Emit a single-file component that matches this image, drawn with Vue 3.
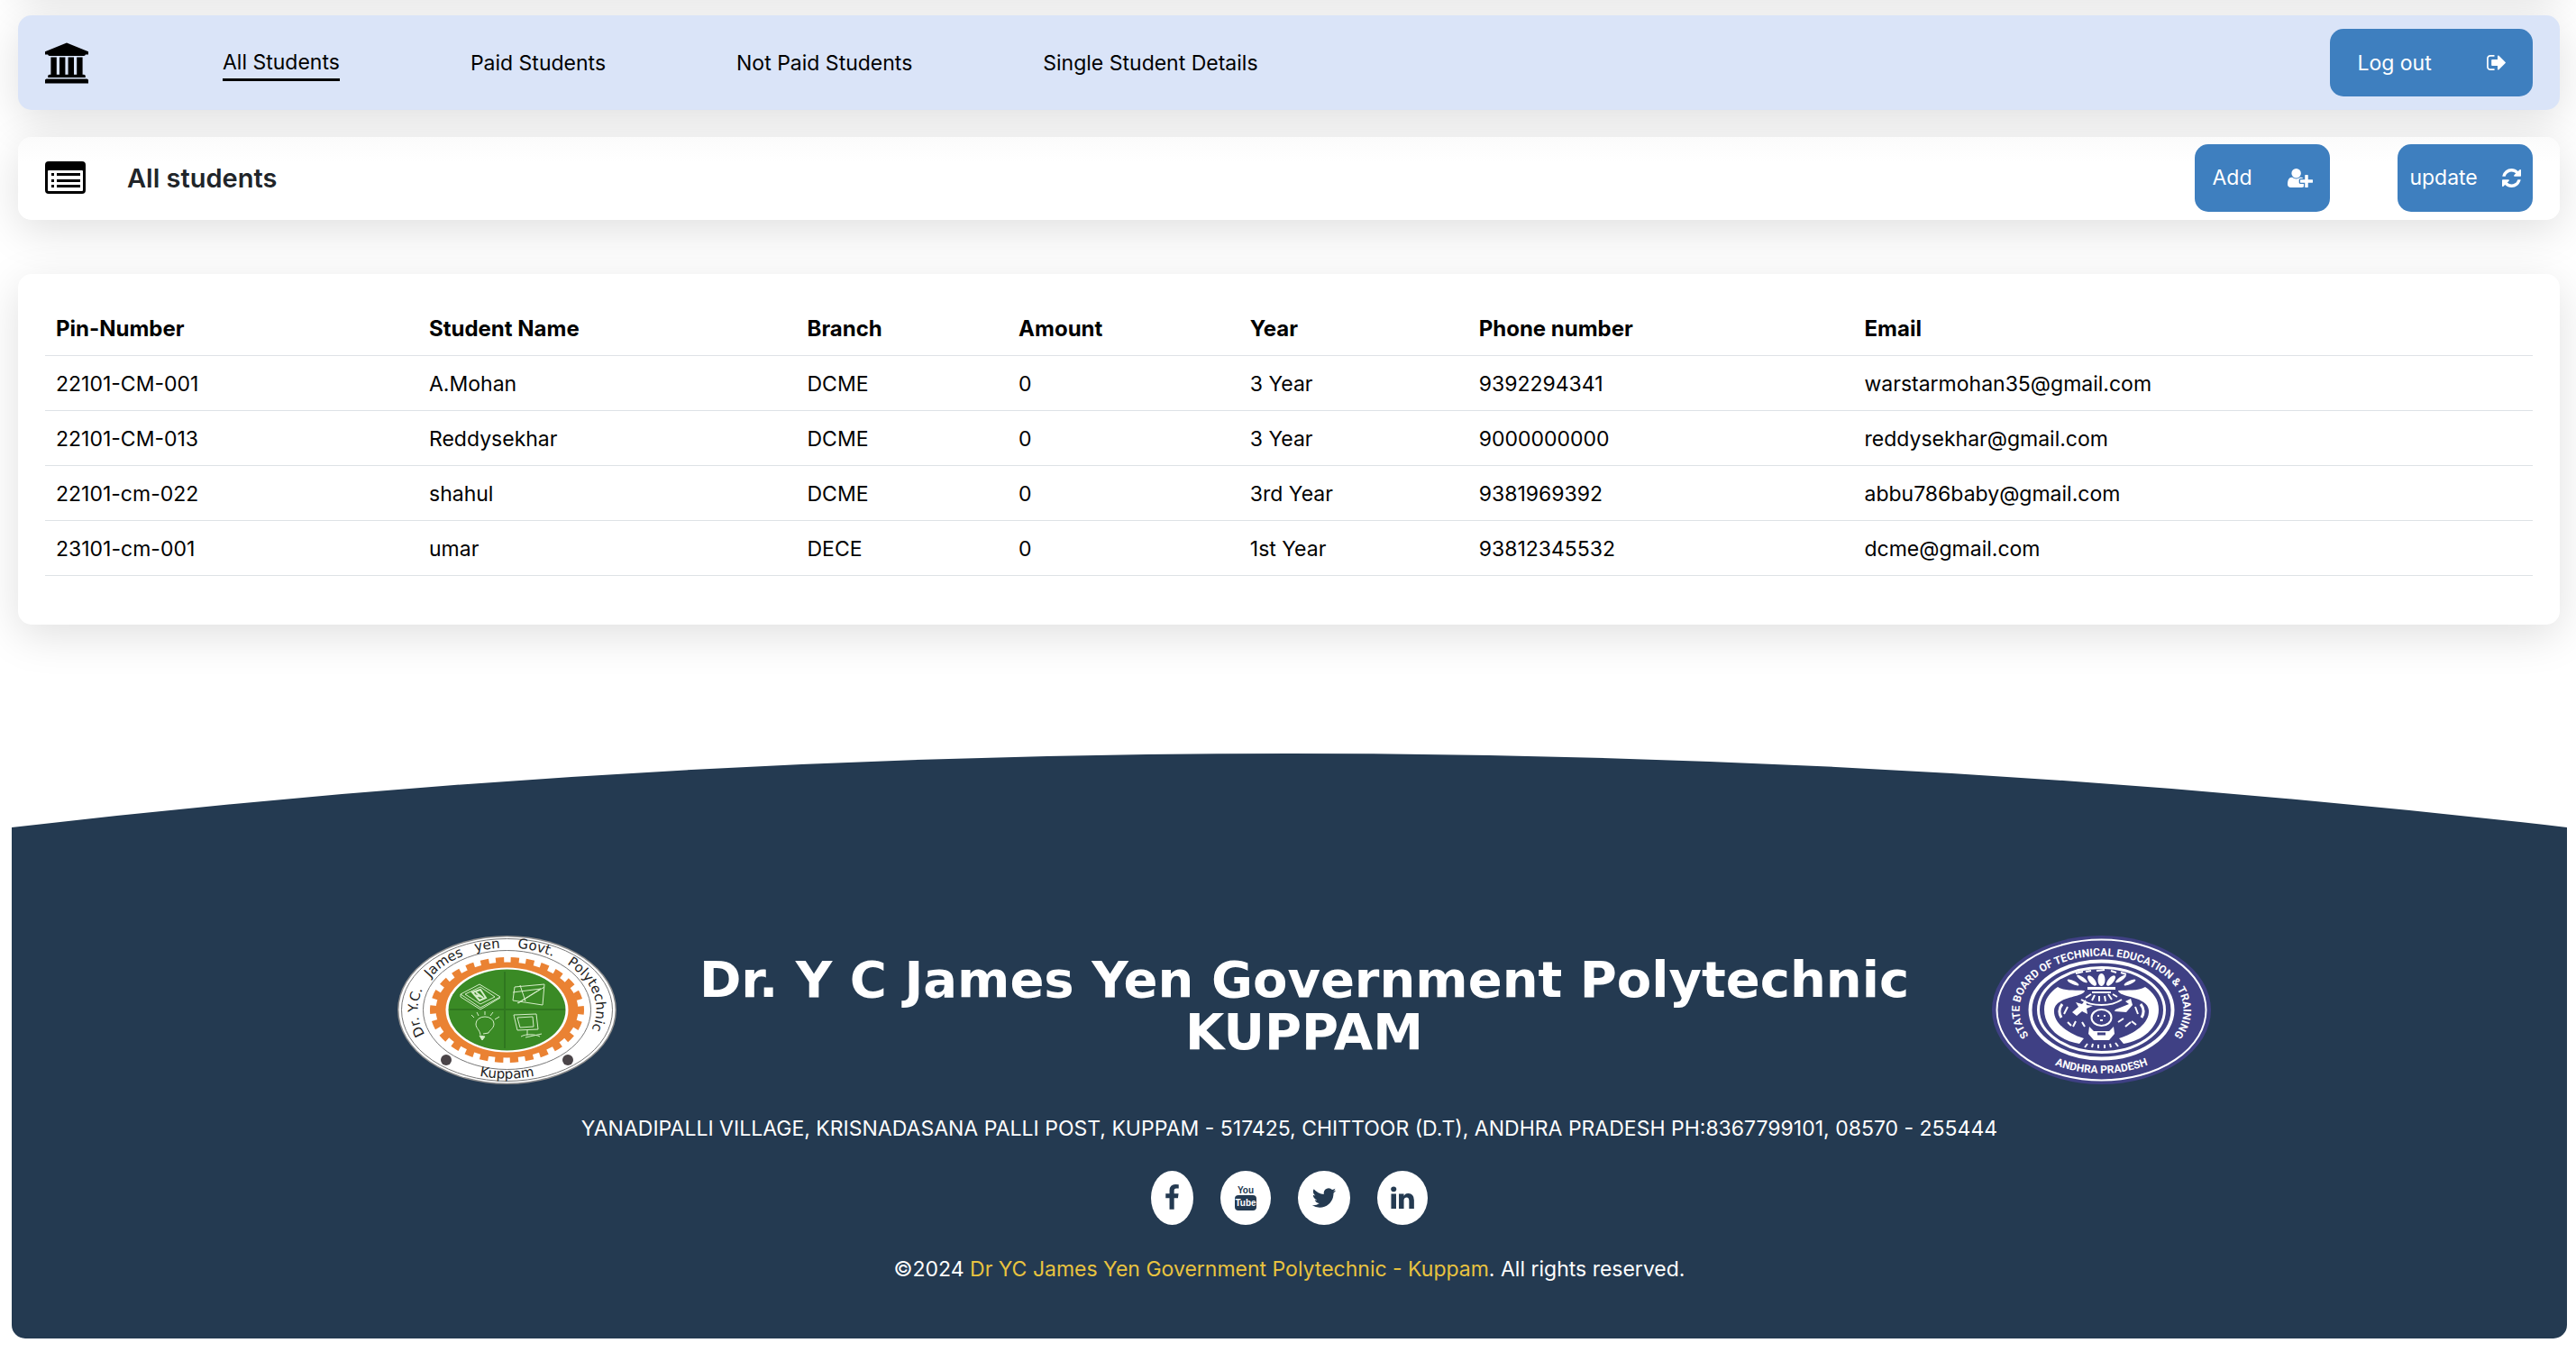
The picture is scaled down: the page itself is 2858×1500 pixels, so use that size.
<script setup>
const navLinks = ['All Students', 'Paid Students', 'Not Paid Students', 'Single Student Details']

const columns = [
  { label: 'Pin-Number', share: 15 },
  { label: 'Student Name', share: 15.2 },
  { label: 'Branch', share: 8.5 },
  { label: 'Amount', share: 9.3 },
  { label: 'Year', share: 9.2 },
  { label: 'Phone number', share: 15.5 },
  { label: 'Email', share: 27.3 },
]

const students = [
  ['22101-CM-001', 'A.Mohan', 'DCME', '0', '3 Year', '9392294341', 'warstarmohan35@gmail.com'],
  ['22101-CM-013', 'Reddysekhar', 'DCME', '0', '3 Year', '9000000000', 'reddysekhar@gmail.com'],
  ['22101-cm-022', 'shahul', 'DCME', '0', '3rd Year', '9381969392', 'abbu786baby@gmail.com'],
  ['23101-cm-001', 'umar', 'DECE', '0', '1st Year', '93812345532', 'dcme@gmail.com'],
]
</script>

<template>
  <div class="page">
    <header class="bar topbar">
      <svg class="bank" viewBox="0 128 1920 1792" aria-hidden="true">
        <path d="M960 128l960 384v128h-128q0 26-20.5 45t-48.5 19h-1526q-28 0-48.5-19t-20.5-45h-128v-128zm-704 640h256v768h128v-768h256v768h128v-768h256v768h128v-768h256v768h59q28 0 48.5 19t20.5 45v64h-1664v-64q0-26 20.5-45t48.5-19h59v-768zm1595 960q28 0 48.5 19t20.5 45v128h-1920v-128q0-26 20.5-45t48.5-19h1782z" />
      </svg>
      <nav class="links">
        <a v-for="(link, i) in navLinks" :key="link" href="#" :class="{ active: i === 0 }">{{ link }}</a>
      </nav>
      <button type="button" class="btn wide">
        <span>Log out</span>
        <svg class="ic-exit" viewBox="64 256 1568 1280" aria-hidden="true">
          <path d="M704 1440q0 4 1 20t.5 26.5-3 23.5-10 19.5-20.5 6.5h-320q-119 0-203.5-84.5t-84.5-203.5v-704q0-119 84.5-203.5t203.5-84.5h320q13 0 22.5 9.5t9.5 22.5q0 4 1 20t.5 26.5-3 23.5-10 19.5-20.5 6.5h-320q-66 0-113 47t-47 113v704q0 66 47 113t113 47h312l11.5 1 11.5 3 8 5.5 7 9 2 13.5zm928-544q0 26-19 45l-544 544q-19 19-45 19t-45-19-19-45v-288h-448q-26 0-45-19t-19-45v-384q0-26 19-45t45-19h448v-288q0-26 19-45t45-19 45 19l544 544q19 19 19 45z" />
        </svg>
      </button>
    </header>

    <section class="bar subbar">
      <svg class="list" viewBox="0 0 45 36" aria-hidden="true">
        <path fill-rule="evenodd" d="M4 0H41a4 4 0 0 1 4 4V32a4 4 0 0 1-4 4H4a4 4 0 0 1-4-4V4a4 4 0 0 1 4-4zM3 11V32a1 1 0 0 0 1 1H41a1 1 0 0 0 1-1V11a1 1 0 0 0-1-1H4a1 1 0 0 0-1 1z" />
        <path d="M7 13h3v3H7zM7 20h3v3H7zM7 26h3v3H7zM13 13h26v3H13zM13 20h26v3H13zM13 26h26v3H13z" />
      </svg>
      <h1>All students</h1>
      <div class="actions">
        <button type="button" class="btn">
          <span>Add</span>
          <svg class="ic-user" viewBox="0 128 2048 1536" aria-hidden="true">
            <path d="M704 896q-159 0-271.5-112.5t-112.5-271.5 112.5-271.5 271.5-112.5 271.5 112.5 112.5 271.5-112.5 271.5-271.5 112.5zm960 128h352q13 0 22.5 9.5t9.5 22.5v192q0 13-9.5 22.5t-22.5 9.5h-352v352q0 13-9.5 22.5t-22.5 9.5h-192q-13 0-22.5-9.5t-9.5-22.5v-352h-352q-13 0-22.5-9.5t-9.5-22.5v-192q0-13 9.5-22.5t22.5-9.5h352v-352q0-13 9.5-22.5t22.5-9.5h192q13 0 22.5 9.5t9.5 22.5v352zm-736 224q0 52 38 90t90 38h256v238q-68 50-171 50h-874q-121 0-194-69t-73-190q0-53 3.5-103.5t14-109 26.5-108.5 43-97.5 62-81 85.5-53.5 111.5-20q19 0 39 17 79 61 154.5 91.5t164.5 30.5 164.5-30.5 154.5-91.5q20-17 39-17 132 0 217 96h-223q-52 0-90 38t-38 90v192z" />
          </svg>
        </button>
        <button type="button" class="btn">
          <span>update</span>
          <svg class="ic-refresh" viewBox="128 128 1536 1536" aria-hidden="true">
            <path d="M1639 1056q0 5-1 7-64 268-268 434.5t-478 166.5q-146 0-282.5-55t-243.5-157l-129 129q-19 19-45 19t-45-19-19-45v-448q0-26 19-45t45-19h448q26 0 45 19t19 45-19 45l-137 137q71 66 161 102t187 36q134 0 250-65t186-179q11-17 53-117 8-23 30-23h192q13 0 22.5 9.5t9.5 22.5zm25-800v448q0 26-19 45t-45 19h-448q-26 0-45-19t-19-45 19-45l138-138q-148-137-349-137-134 0-250 65t-186 179q-11 17-53 117-8 23-30 23h-199q-13 0-22.5-9.5t-9.5-22.5v-7q65-268 270-434.5t480-166.5q146 0 284 55.5t245 156.5l130-129q19-19 45-19t45 19 19 45z" />
          </svg>
        </button>
      </div>
    </section>

    <main class="card">
      <table>
        <colgroup>
          <col v-for="col in columns" :key="col.label" :style="{ width: col.share + '%' }" />
        </colgroup>
        <thead>
          <tr>
            <th v-for="col in columns" :key="col.label" scope="col">{{ col.label }}</th>
          </tr>
        </thead>
        <tbody>
          <tr v-for="row in students" :key="row[0]">
            <td v-for="(cell, i) in row" :key="i">{{ cell }}</td>
          </tr>
        </tbody>
      </table>
    </main>

    <footer>
      <svg class="arc" viewBox="0 0 2834 82" preserveAspectRatio="none" aria-hidden="true">
        <path d="M0 82Q1417 -82 2834 82z" />
      </svg>
      <div class="foot">
        <div class="brand">
          <svg class="seal" viewBox="0 0 243 165" role="img" aria-label="College seal">
            <defs>
              <path id="sealTop" d="M32 112A99 69 0 1 1 211 112" />
              <path id="sealBottom" d="M20 112A110 76 0 0 0 223 112" />
            </defs>
            <ellipse cx="121.5" cy="82.5" rx="121.5" ry="82.5" fill="#8d8d8d" />
            <ellipse cx="121.5" cy="82.5" rx="120" ry="81" fill="#fff" />
            <ellipse cx="121.5" cy="82.5" rx="117" ry="79" fill="#fff" stroke="#777" />
            <ellipse cx="121.5" cy="82.5" rx="93" ry="66" fill="#fff" stroke="#777" />
            <ellipse cx="121.5" cy="82.5" rx="82" ry="55" fill="none" stroke="#ea8233" stroke-width="7" pathLength="520" stroke-dasharray="11 9" stroke-dashoffset="5" />
            <ellipse cx="121.5" cy="82.5" rx="79" ry="53" fill="#ea8233" />
            <ellipse cx="121.5" cy="82.5" rx="68" ry="47" fill="#fff" />
            <ellipse cx="121.5" cy="82.5" rx="65" ry="45" fill="#3a8a25" />
            <path d="M119 40v85M58 82h128" fill="none" stroke="#2f771f" stroke-width="2" />
            <g fill="none" stroke="#d5ecc9" stroke-width="1">
              <path d="M70 65l21-11 23 14-22 12zM75 65l17-8 16 11-16 8zM70 65v3l22 14 22-13" />
              <path d="M83 63l9-3 6 9-7 3zM85 66l9 2M87 63l8 6" stroke-width="2" />
              <path d="M130 57l33-3-2 23-33-5zM128 63l31-4-26 16M136 55l6 18M134 75l29-18" />
              <path d="M92 110c-1-6-5-7-5-12a10 8 0 0 1 20 0c0 5-5 7-6 10l-6 1M85 91l-3-3M90 89l-2-4M97 88v-4M103 89l3-4M108 93l5-3" />
              <path d="M91 111l6 1-3 4z" fill="#d5ecc9" />
              <path d="M129 88l25-1 2 17-23 1zM133 91l17-1 1 11-15 1zM144 105v6M137 112c5-3 15-3 21 0M142 113l18-4" />
            </g>
            <circle cx="54" cy="138" r="6" fill="#4a4448" />
            <circle cx="189" cy="138" r="6" fill="#4a4448" />
            <g class="seal-text">
              <text><textPath href="#sealTop" startOffset="3">Dr. Y.C.</textPath></text>
              <text><textPath href="#sealTop" startOffset="70">James</textPath></text>
              <text><textPath href="#sealTop" startOffset="129">yen</textPath></text>
              <text><textPath href="#sealTop" startOffset="176">Govt.</textPath></text>
              <text><textPath href="#sealTop" startOffset="234">Polytechnic</textPath></text>
              <text text-anchor="middle"><textPath href="#sealBottom" startOffset="50%">Kuppam</textPath></text>
            </g>
          </svg>

          <h2>Dr. Y C James Yen Government Polytechnic<br />KUPPAM</h2>

          <svg class="seal" viewBox="0 0 243 165" role="img" aria-label="State board seal">
            <defs>
              <path id="boardTop" d="M48 118A91 60 0 1 1 195 118" />
              <path id="boardBottom" d="M20 98A104 70 0 0 0 223 98" />
            </defs>
            <ellipse cx="121.5" cy="82.5" rx="121.5" ry="82.5" fill="#3f4084" />
            <g fill="none" stroke="#fff">
              <ellipse cx="121.5" cy="82.5" rx="116" ry="78" stroke-width="2" />
              <ellipse cx="121.5" cy="82.5" rx="79" ry="54" stroke-width="4" />
              <ellipse cx="121.5" cy="82.5" rx="70" ry="47" stroke-width="3" />
            </g>
            <g fill="#fff">
              <path d="M73 57c8 5 20 3 30 4-1 8-33 6-34 22-1 14 16 26 33 31l-5 6C76 117 58 102 58 82c0-11 6-19 15-25z" />
              <path d="M170 57c-8 5-20 3-30 4 1 8 33 6 34 22 1 14-16 26-33 31l5 6c21-3 39-18 39-38 0-11-6-19-15-25z" />
              <ellipse cx="121.5" cy="49" rx="4" ry="7" />
              <ellipse cx="111" cy="50" rx="3" ry="7" transform="rotate(-40 111 50)" />
              <ellipse cx="132" cy="50" rx="3" ry="7" transform="rotate(40 132 50)" />
              <ellipse cx="100" cy="48" rx="2" ry="7" transform="rotate(-55 100 48)" />
              <ellipse cx="143" cy="48" rx="2" ry="7" transform="rotate(55 143 48)" />
              <ellipse cx="90" cy="52" rx="2" ry="7" transform="rotate(-65 90 52)" />
              <ellipse cx="153" cy="52" rx="2" ry="7" transform="rotate(65 153 52)" />
              <path d="M106 57h31v3h-31zM111 62h21v2h-21z" />
              <path d="M89 85l7-6-3-5 7 2 4-5 1 6 7 1-7 3 1 6-6-3-6 5z" />
              <path d="M137 82l15-6-4-3 6-3 2 7-7 8-13-1z" />
              <path d="M108 101l5 5h17l5-5 1 8-6 7h-17l-6-7z" />
            </g>
            <g fill="none" stroke="#fff" stroke-width="2">
              <path d="M104 69l6-4M111 72l3-6M119 73v-6M126 73l-1-6M133 71l-4-6M139 68l-5-3M99 71c12 8 33 8 45 0" />
              <ellipse cx="121.5" cy="91" rx="11" ry="9" />
              <path d="M78 76c-4 5-4 10-1 15M165 76c4 5 4 10 1 15" stroke-width="3" />
              <path d="M84 96l4 4M93 95l-3 6M100 96l3 5M140 96l6-4M148 101l6-5M155 95l5 4M106 120l-3 4M112 120l-1 4M118 121v4M125 121v4M131 120l1 4M137 119l3 4" />
              <path d="M84 79l-4 8M159 79l3 8M93 42l8-2M104 40l6-1M116 39l9-1M132 39l6 2M143 41l6 2" />
            </g>
            <path d="M117 89h2M124 89h2M120 94h3" stroke="#fff" stroke-width="2" />
            <path d="M117 109h9" stroke="#3f4084" stroke-width="3" />
            <g class="board-text">
              <text text-anchor="middle"><textPath href="#boardTop" startOffset="50%">STATE BOARD OF TECHNICAL EDUCATION &amp; TRAINING</textPath></text>
              <text text-anchor="middle"><textPath href="#boardBottom" startOffset="50%">ANDHRA PRADESH</textPath></text>
            </g>
          </svg>
        </div>

        <p>YANADIPALLI VILLAGE, KRISNADASANA PALLI POST, KUPPAM - 517425, CHITTOOR (D.T), ANDHRA PRADESH PH:8367799101, 08570 - 255444</p>

        <div class="social">
          <a href="#" aria-label="Facebook">
            <svg width="17" height="30" viewBox="479 0 864 1792">
              <path d="M1343 12v264h-157q-86 0-116 36t-30 108v189h293l-39 296h-254v759h-306v-759h-255v-296h255v-218q0-186 104-288.5t277-102.5q147 0 228 12z" />
            </svg>
          </a>
          <a href="#" aria-label="YouTube">
            <svg class="tube" width="26" height="30" viewBox="0 0 26 30">
              <text x="13" y="10" text-anchor="middle" fill="#243a51">You</text>
              <rect x="1" y="12" width="24" height="17" rx="4" />
              <text x="13" y="24" text-anchor="middle" fill="#fff">Tube</text>
            </svg>
          </a>
          <a href="#" aria-label="Twitter">
            <svg width="28" height="30" viewBox="60 0 1672 1792">
              <path d="M1684 408q-67 98-162 167 1 14 1 42 0 130-38 259.5t-115.5 248.5-184.5 210.5-258 146-323 54.5q-271 0-496-145 35 4 78 4 225 0 401-138-105-2-188-64.5t-114-159.5q33 5 61 5 43 0 85-11-112-23-185.5-111.5t-73.5-205.5v-4q68 38 146 41-66-44-105-115t-39-154q0-88 44-163 121 149 294.5 238.5t371.5 99.5q-8-38-8-74 0-134 94.5-228.5t228.5-94.5q140 0 236 102 109-21 205-78-37 115-142 178 93-10 186-50z" />
            </svg>
          </a>
          <a href="#" aria-label="LinkedIn">
            <svg width="26" height="30" viewBox="120 0 1553 1792">
              <path d="M477 625v991h-330v-991h330zm21-306q1 73-50.5 122t-135.5 49h-2q-82 0-132-49t-50-122q0-74 51.5-122.5t134.5-48.5 133 48.5 51 122.5zm1166 729v568h-329v-530q0-105-40.5-164.5t-126.5-59.5q-63 0-105.5 34.5t-63.5 85.5q-11 30-11 81v553h-329q2-399 2-647t-1-296l-1-48h329v144h-2q20-32 41-56t56.5-52 87-43.5 114.5-15.5q171 0 275 113.5t104 332.5z" />
            </svg>
          </a>
        </div>

        <p>©2024 <a class="gold" href="#">Dr YC James Yen Government Polytechnic - Kuppam</a>. All rights reserved.</p>
      </div>
    </footer>
  </div>
</template>

<style>
body {
  margin: 0;
  background: #fff;
}
</style>

<style scoped>
.page {
  padding: 17px 0 15px;
  overflow: hidden;
  font: 23px/36px Inter, "Liberation Sans", sans-serif;
  color: #000;
}
.bar,
.card {
  margin: 0 18px 0 20px;
  padding: 0 30px;
  border-radius: 15px;
  box-shadow: 0 12px 48px rgba(0, 0, 0, 0.125);
}
.bar {
  display: flex;
  align-items: center;
  box-sizing: border-box;
}
.topbar {
  height: 105px;
  background: #dae4f8;
  box-shadow: 0 12px 48px rgba(0, 0, 0, 0.125), 0 -122px 48px rgba(0, 0, 0, 0.12);
}
.bank {
  width: 48px;
  height: 46px;
}
.links {
  display: flex;
  align-items: center;
  gap: 145px;
  margin: 0 auto 0 149px;
}
.links a {
  padding-top: 2px;
  color: #000;
  line-height: 35px;
  text-decoration: none;
}
.links .active {
  border-bottom: 3px solid #000;
}
.btn {
  display: flex;
  align-items: center;
  justify-content: space-around;
  width: 150px;
  height: 75px;
  padding: 0;
  border: 0;
  border-radius: 15px;
  background: #3e7fbf;
  color: #fff;
  font: inherit;
}
.btn.wide {
  width: 225px;
}
.btn svg {
  fill: #fff;
}
.ic-exit {
  width: 21px;
  height: 17px;
}
.ic-user {
  width: 28px;
  height: 21px;
}
.ic-refresh {
  width: 21px;
  height: 21px;
}
.subbar {
  height: 92px;
  margin-top: 30px;
  padding-bottom: 2px;
  background: linear-gradient(#fbfbfb, #fff 28px);
}
.list {
  width: 45px;
  height: 36px;
}
h1 {
  margin: 0 auto 0 46px;
  padding-top: 2px;
  font-size: 29px;
  font-weight: 600;
  color: #212529;
}
.actions {
  display: flex;
  gap: 75px;
}
.card {
  margin-top: 60px;
  padding: 30px 30px 54px;
  background: #fff;
}
table {
  width: 100%;
  table-layout: fixed;
  border-collapse: separate;
  border-spacing: 0;
}
th,
td {
  padding: 13px 12px 11px;
  border-bottom: 1px solid #dee2e6;
  text-align: left;
}
th {
  font-size: 24px;
  font-weight: 700;
}
footer {
  margin: 143px 10px 0 13px;
}
.arc {
  display: block;
  width: 100%;
  height: 82px;
  fill: #243a51;
}
.foot {
  display: flex;
  flex-direction: column;
  align-items: center;
  gap: 30px;
  padding: 120px 0 60px;
  border-radius: 0 0 15px 15px;
  background: #243a51;
  color: #fff;
}
.brand {
  display: flex;
  align-items: center;
  justify-content: space-between;
  width: 71%;
  margin-left: 33px;
}
.seal {
  flex: none;
  width: 243px;
  height: 165px;
}
.seal-text {
  font: 15px "DejaVu Sans", sans-serif;
  fill: #222;
}
.board-text {
  font: 700 12px Roboto, sans-serif;
  fill: #fff;
}
h2 {
  margin: 0 0 10px;
  font: 700 56px/58px "DejaVu Sans", sans-serif;
  text-align: center;
}
p {
  margin: 0;
  padding-top: 2px;
  line-height: 34px;
}
.social {
  display: flex;
  gap: 30px;
}
.social a {
  display: flex;
  align-items: center;
  height: 60px;
  padding: 0 15px;
  border-radius: 50%;
  background: #fff;
}
.social svg {
  fill: #243a51;
}
.tube {
  font: 700 10px "Liberation Sans", sans-serif;
}
.gold {
  color: #e9c33f;
  text-decoration: none;
}
</style>
